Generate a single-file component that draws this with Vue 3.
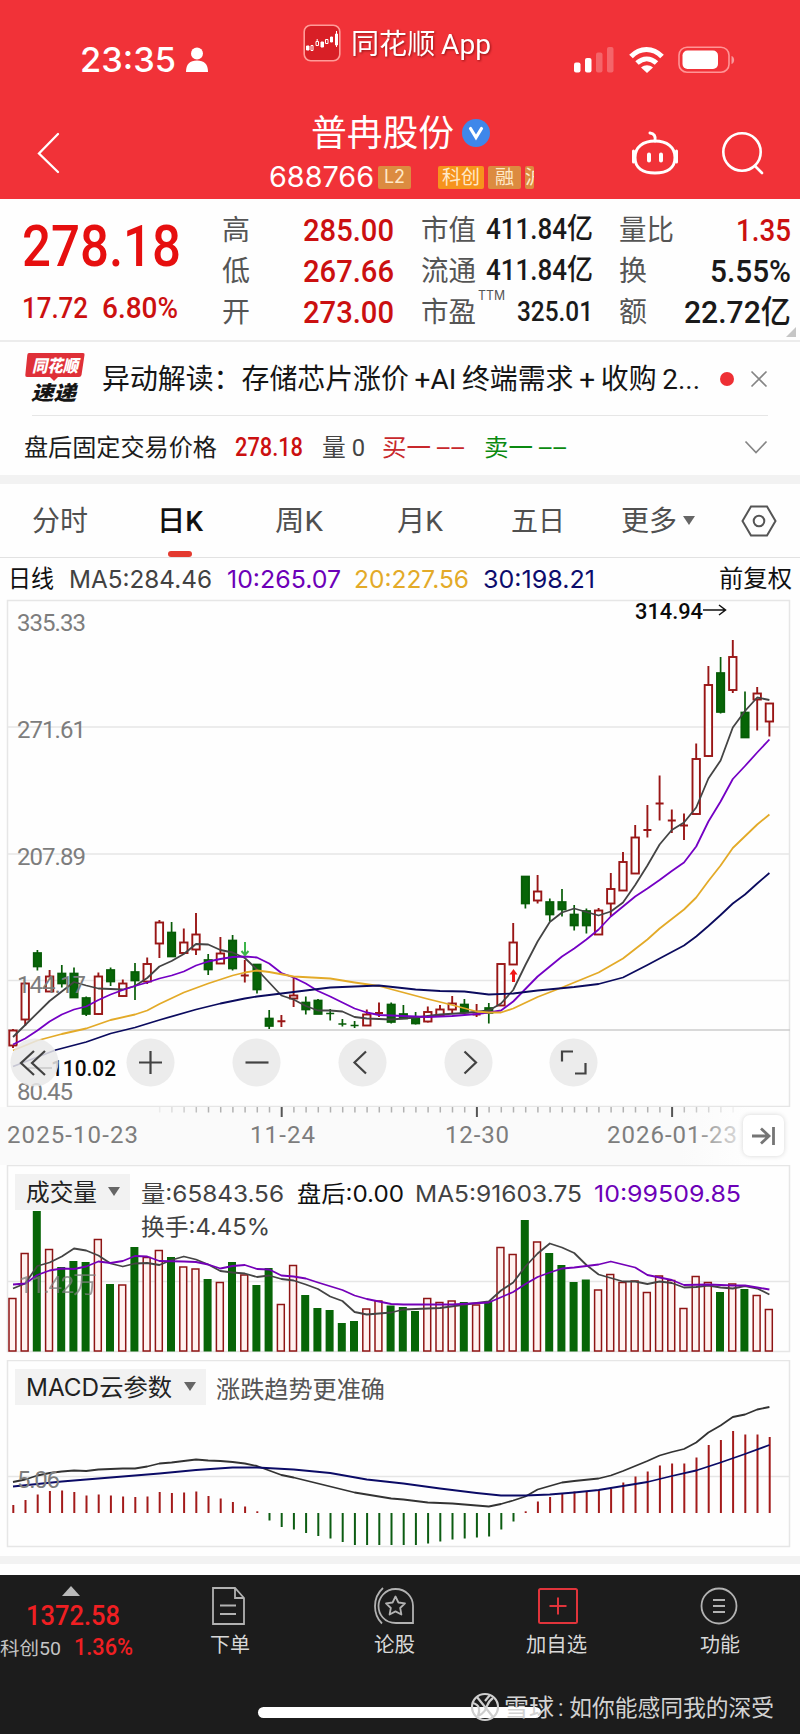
<script setup>
import { h } from 'vue'

// Text run stretched to a given advance width; its box is one font size tall.
const Fit = (p) =>
  h('svg', { class: 'fit', width: p.w, height: p.s, 'font-size': p.s }, [
    h('text', { x: 0, y: p.s * 0.86, textLength: p.w, lengthAdjust: 'spacingAndGlyphs' }, p.t),
  ])
Fit.props = ['t', 'w', 's']

const X0 = 13
const STEP = 12.2
const xi = (i) => X0 + i * STEP

const headline = '异动解读：存储芯片涨价\u2009+AI\u2009终端需求\u2009+\u2009收购\u20092...'
const brand = '同花顺\u2009App'

// colour, high, body top, body bottom, low
const candles = [
  ['r', 1029, 1030.5, 1045.5, 1048], ['r', 982.5, 983.5, 1019.5, 1026], ['g', 950, 953, 966.5, 970.5],
  ['r', 970, 976.5, 991.5, 991.5], ['g', 965, 973.5, 983.5, 987.5], ['g', 967.5, 973.5, 997.5, 997.5],
  ['g', 996.5, 998, 1014, 1016], ['r', 972.5, 976.5, 1014, 1015], ['g', 967.5, 970, 981.5, 986],
  ['r', 979.5, 983.5, 996, 996.5], ['g', 963, 972, 980.5, 1000], ['r', 957.5, 964, 981.5, 984],
  ['r', 920, 922.5, 943.5, 958], ['g', 922, 932.5, 956.5, 957], ['r', 928.5, 942.5, 953, 953.5],
  ['r', 913, 934.5, 949.5, 955], ['g', 954, 960, 969.5, 975], ['r', 937, 953.5, 963.5, 963.5],
  ['g', 935, 940.5, 968.5, 970.5], ['r', 960, 975, 976, 982.5], ['g', 964.5, 964.5, 989.5, 993.5],
  ['g', 1010, 1018.5, 1026, 1029], ['r', 1015, 1021, 1021.5, 1027], ['r', 977, 995.5, 998.5, 1007],
  ['g', 996.5, 1002.5, 1009.5, 1014.5], ['g', 999, 1000.5, 1014, 1014], ['g', 1009, 1013, 1014, 1020.5],
  ['g', 1019, 1023.5, 1024.5, 1026.5], ['g', 1021, 1025, 1026, 1028], ['r', 1009.5, 1014.5, 1025.5, 1025.5],
  ['r', 1002.5, 1012.5, 1013.5, 1017], ['g', 1002.5, 1004.5, 1022, 1023.5], ['g', 1005, 1014, 1018.5, 1019],
  ['g', 1012, 1017, 1023.5, 1024.5], ['r', 1006.5, 1012, 1021.5, 1022.5], ['r', 1005, 1009.5, 1015, 1017],
  ['r', 996, 1003.5, 1009.5, 1013], ['g', 999, 1004.5, 1012.5, 1014], ['r', 1004, 1014, 1015, 1017],
  ['g', 1003, 1008, 1013, 1023.5], ['r', 963.5, 964, 1005.5, 1005.5], ['r', 923, 942.5, 964.5, 965],
  ['g', 876, 876.5, 903.5, 908.5], ['r', 875, 891.5, 900.5, 903.5], ['g', 898.5, 902, 914.5, 921.5],
  ['g', 889, 902, 909.5, 916.5], ['g', 905, 914.5, 925.5, 930.5], ['g', 908.5, 911, 925.5, 933.5],
  ['r', 908, 910.5, 934.5, 935], ['r', 873, 889, 903.5, 916.5], ['r', 852, 862, 890.5, 890.5],
  ['r', 825, 837.5, 873.5, 874], ['r', 805, 829.5, 830.5, 837.5], ['r', 775.5, 803, 804, 820.5],
  ['r', 809.5, 820, 821, 833], ['r', 813.5, 825, 826, 840], ['r', 743.5, 759, 814, 814.5],
  ['r', 666, 685, 756, 757], ['g', 657, 673, 712, 713.5], ['r', 640, 657, 690, 693],
  ['g', 691.5, 712.5, 737.5, 737.5], ['r', 687, 693.5, 699.5, 730.5], ['r', 703, 703.5, 721.5, 736.5],
].map(([c, hi, t, b, lo], i) => ({ up: c === 'r', cross: b - t < 2, hi, t, b, lo, x: xi(i) }))

const line = (pts) => pts.map(([i, y]) => xi(i).toFixed(1) + ',' + y).join(' ')

const ma5 = line([[0, 1037], [1, 1025], [3, 1001], [5, 982], [6, 985.5], [7, 988.5], [9, 989.5], [10, 986], [11, 978], [12, 966.5], [13, 961], [14, 954], [15, 944], [16, 944.5], [17, 950], [18, 952.5], [19, 958], [20, 969.5], [21, 982.5], [22, 995.5], [23, 999.5], [24, 1006], [25, 1010.5], [26, 1010.5], [27, 1011.5], [28, 1017], [29, 1018.5], [31, 1019.5], [33, 1017.5], [35, 1014.5], [37, 1013], [39, 1010.5], [40, 1003.5], [41, 990], [42, 965], [43, 941.5], [44, 922], [45, 912.5], [46, 908.5], [47, 912], [48, 915.5], [49, 911.5], [50, 902.5], [51, 885], [52, 865.5], [53, 844.5], [54, 830], [55, 822.5], [56, 807.5], [57, 778.5], [58, 760.5], [59, 727.5], [60, 711], [61, 697.5], [62, 700]])
const ma10 = line([[0, 1044.5], [1, 1038.5], [2, 1030.5], [3, 1021.5], [4, 1014.5], [5, 1009.5], [6, 1006.5], [7, 1000], [8, 994.5], [9, 990], [10, 986], [11, 982.5], [12, 978.5], [13, 975.5], [14, 971.5], [15, 965.5], [16, 961.5], [17, 959], [18, 957], [19, 956.5], [20, 957.5], [21, 963.5], [22, 973], [23, 977.5], [24, 983.5], [25, 991], [26, 996.5], [27, 1002.5], [28, 1008.5], [29, 1012.5], [30, 1015], [32, 1016], [34, 1017], [36, 1016], [38, 1014], [39, 1012.5], [40, 1010.5], [41, 1001.5], [42, 989], [43, 976.5], [44, 966.5], [45, 956.5], [46, 948.5], [47, 939.5], [48, 929.5], [49, 916.5], [50, 906.5], [51, 896.5], [52, 888.5], [53, 880], [54, 871], [55, 862.5], [56, 846.5], [57, 821.5], [58, 801.5], [59, 779], [60, 766], [61, 752.5], [62, 739.5]])
const ma20 = line([[0, 1050.5], [2, 1040.5], [4, 1034], [6, 1028.5], [8, 1020], [10, 1014.5], [11, 1010.5], [12, 1004], [14, 992.5], [16, 983.5], [18, 975.5], [19, 972.5], [20, 970.5], [21, 972], [23, 976.5], [26, 978.5], [28, 982.5], [30, 986], [32, 992.5], [34, 999], [36, 1005], [38, 1011.5], [39, 1012.5], [40, 1012.5], [41, 1008.5], [43, 997], [45, 987.5], [47, 977.5], [48, 972.5], [50, 958.5], [52, 939.5], [53, 928.5], [55, 909.5], [56, 897.5], [57, 881], [58, 865.5], [59, 848], [61, 824.5], [62, 814.5]])
const ma30 = line([[0, 1066.5], [3.5, 1050], [6, 1042], [8, 1033.5], [10, 1027.5], [12, 1020], [15, 1009.5], [17, 1003.5], [19, 998.5], [20, 996.5], [22, 993.5], [24, 990.5], [26, 987.5], [30, 985.5], [33, 989.5], [35, 991], [37, 991.5], [39, 994.5], [41, 993.5], [43, 990.5], [46, 987], [48, 984], [50, 977.5], [52, 965], [55, 945.5], [56, 936.5], [57, 926], [58, 915], [59, 903.5], [60, 894.5], [61, 883.5], [62, 873]])

const volTops = [1298.5, 1253.5, 1211, 1249.5, 1267, 1261, 1262, 1239.5, 1284, 1285, 1247, 1257.5, 1250.5, 1257, 1267, 1269, 1279, 1282.5, 1262, 1275, 1285, 1268, 1304.5, 1265.5, 1295, 1308, 1310, 1323, 1321, 1309, 1301, 1305.5, 1307, 1311, 1298.5, 1302.5, 1301, 1302, 1305, 1301.5, 1247.5, 1254.5, 1220, 1242, 1253, 1265, 1282, 1279.5, 1290, 1274.5, 1282.5, 1281, 1292.5, 1276, 1280.5, 1308.5, 1276.5, 1282.5, 1292, 1284, 1289, 1295.5, 1309.5]
const vols = volTops.map((y, i) => ({ y, x: xi(i) - 0.6, up: candles[i].up }))
const vma5 = line([[0, 1288.5], [1, 1283.5], [2, 1266], [3, 1262.5], [4, 1256.5], [5, 1248.5], [6, 1250.5], [7, 1255.5], [8, 1263.5], [9, 1266.5], [10, 1263.5], [11, 1263], [12, 1265], [13, 1260], [14, 1256.5], [15, 1259.5], [16, 1264.5], [17, 1271], [18, 1272.5], [19, 1273.5], [20, 1277], [21, 1275.5], [22, 1279], [23, 1280.5], [24, 1284.5], [25, 1289], [26, 1296.5], [27, 1301], [28, 1312], [29, 1314.5], [30, 1313.5], [31, 1312.5], [32, 1309.5], [35, 1308], [38, 1303], [39, 1301.5], [40, 1290.5], [41, 1282.5], [42, 1266.5], [43, 1253.5], [44, 1243.5], [45, 1247.5], [46, 1253], [47, 1265], [48, 1274.5], [50, 1281.5], [51, 1281.5], [52, 1284], [53, 1281.5], [54, 1283], [55, 1287.5], [56, 1287], [57, 1285.5], [58, 1287.5], [59, 1288.5], [60, 1286], [61, 1288.5], [62, 1294.5]])
const vma10 = line([[0, 1284.5], [1, 1283.5], [2, 1275], [3, 1270.5], [4, 1268.5], [5, 1269], [6, 1266.5], [7, 1261.5], [8, 1263], [9, 1261], [10, 1256], [11, 1256.5], [12, 1261], [14, 1261.5], [15, 1262], [16, 1264.5], [17, 1268.5], [18, 1266], [19, 1265], [20, 1269], [21, 1269.5], [22, 1275.5], [23, 1276.5], [24, 1278.5], [25, 1282.5], [27, 1290], [28, 1295.5], [29, 1299], [30, 1301.5], [31, 1304], [32, 1304.5], [36, 1304.5], [39, 1302.5], [41, 1292], [42, 1284], [43, 1277], [44, 1272.5], [45, 1268.5], [46, 1267.5], [48, 1264.5], [49, 1261.5], [51, 1267.5], [52, 1275], [54, 1280], [55, 1285], [57, 1284.5], [59, 1285.5], [60, 1285.5], [61, 1287.5], [62, 1289.5]])

const macdEnds = [1505, 1500, 1494.5, 1491, 1490.5, 1492, 1495.5, 1494.5, 1495.5, 1496.5, 1497, 1496.5, 1492, 1493, 1492.5, 1491.5, 1496, 1498.5, 1502, 1506.5, 1511.3, 1520.5, 1527, 1529.5, 1533, 1536, 1538.5, 1542, 1545, 1545, 1545, 1545, 1545, 1545, 1543.5, 1541.5, 1539.5, 1538.5, 1537.5, 1536.5, 1529.5, 1521.5, 1511.3, 1501.5, 1497, 1493.5, 1491.5, 1491.5, 1490, 1489, 1482.5, 1476.5, 1471.5, 1465.5, 1463.5, 1463.5, 1457.5, 1445, 1440, 1431, 1434.5, 1434.5, 1437]
const macd = macdEnds.map((y, i) => ({ x: xi(i) + 0.3, y, up: y < 1513 }))
const dif = line([[0, 1482], [1, 1479.5], [2, 1475.5], [3, 1473], [4, 1471.5], [5, 1470.5], [6, 1471], [7, 1469.5], [9, 1468.5], [10, 1468.5], [11, 1466.5], [12, 1463.5], [13, 1462.5], [15, 1459.5], [16, 1460.5], [17, 1461], [18, 1462], [19, 1463.5], [20, 1466], [21, 1470.5], [22, 1475], [23, 1477.5], [25, 1483.5], [28, 1492.5], [31, 1498.5], [32, 1499.5], [34, 1502.5], [36, 1503.5], [38, 1505.5], [39, 1506.5], [40, 1504], [41, 1500.5], [42, 1496.5], [43, 1489.5], [45, 1482.5], [46, 1481], [48, 1478.5], [49, 1475.5], [50, 1471], [52, 1461], [53, 1455.5], [54, 1452], [55, 1449], [56, 1442.5], [57, 1432.5], [58, 1425.5], [59, 1417], [60, 1414.5], [61, 1409.5], [62, 1407]])
const dea = line([[0, 1486.5], [4, 1481.5], [8, 1477.5], [12, 1473.5], [15, 1470], [18, 1467.5], [20, 1467.5], [23, 1469.5], [26, 1473], [29, 1479.5], [32, 1483.5], [35, 1488.5], [38, 1493], [40, 1495.5], [42, 1495.5], [44, 1494.5], [46, 1492.5], [48, 1490], [50, 1486], [52, 1482], [54, 1476], [56, 1470.5], [58, 1462.5], [60, 1454], [62, 1445]])

const ticks = Array.from({ length: 48 }, (_, k) => {
  const i = k + 12
  const major = i === 22 || i === 38 || i === 54
  return { x: xi(i) + 0.3, major, o: Math.min(1, (k + 1) / 5, (48 - k) / 6) }
})
</script>

<template>
  <div class="page">
    <header class="top">
      <div class="status">
        <Fit class="clock sf" t="23:35" :w="96" :s="34" />
        <svg class="person" width="24" height="26" viewBox="0 0 24 26"><circle cx="12" cy="6.500" r="6" /><path d="M1 25c0-8 4-11.500 11-11.500S23 17 23 25z" /></svg>
        <div class="brand">
          <svg width="38" height="38" viewBox="0 0 38 38">
            <rect x="1.200" y="1.200" width="35.600" height="35.600" rx="6.500" fill="#d81f26" stroke="#ff9c98" stroke-width="1.600" />
            <g stroke="#fff" stroke-width="1" fill="#fff"><path d="M3.500 22h2.500v4H3.500zM18 18h2.500v5H18zM27.500 13h2v5h-2z" /><path d="M8 21.500h2v5H8zM13 17.500h2.500v4H13zM14.200 15v2M22.500 15.500h2.500v4h-2.500zM33.500 7v16M32.500 10h2v11h-2z" fill="none" /></g>
          </svg>
          <Fit class="shadow" :t="brand" :w="140" :s="28.500" />
        </div>
        <svg class="signals" width="162" height="28" viewBox="0 0 162 28" fill="#fff">
          <rect x="0" y="16.500" width="6.500" height="10" rx="2" /><rect x="11" y="12" width="6.500" height="14.500" rx="2" />
          <rect x="22" y="6.500" width="6.500" height="20" rx="2" opacity=".25" /><rect x="33" y="1" width="6.500" height="25.500" rx="2" opacity=".25" />
          <g fill="none" stroke="#fff" stroke-width="5"><path d="M57 10.500c9-9.500 22-9.500 31 0" /><path d="M63 17c6-5.500 13.500-5.500 19.500 0" /></g>
          <path d="M67 21.500c4-3 8-3 12 0L73 27z" />
          <rect x="105" y="1.200" width="50" height="25" rx="8" fill="none" stroke="#ff9596" stroke-width="1.600" />
          <rect x="108.500" y="4.500" width="35.500" height="18.500" rx="5" /><path d="M157.500 10c3.500 1 3.500 7 0 8z" opacity=".5" />
        </svg>
      </div>
      <div class="titlebar">
        <svg class="back" width="24" height="42" viewBox="0 0 24 42"><path d="M22 2L3 21.500 22 40" /></svg>
        <div class="titles">
          <div class="name"><Fit t="普冉股份" :w="143" :s="36" /><svg width="30" height="30" viewBox="0 0 30 30"><circle cx="15" cy="15" r="14" fill="#3f87ea" /><path d="M9.500 10.500l5.500 9 5.500-9" fill="none" stroke="#fff" stroke-width="3.200" /></svg></div>
          <div class="code">
            <Fit class="sf" t="688766" :w="105" :s="28" />
            <span class="tag"><Fit class="sf" t="L2" :w="21" :s="18" /></span>
            <span class="tag hot"><Fit t="科创" :w="38" :s="19.500" /></span>
            <span class="tag"><Fit t="融" :w="19" :s="19" /></span>
            <span class="tag cut"><Fit t="沪" :w="19" :s="19" /></span>
          </div>
        </div>
        <svg class="robot" width="50" height="46" viewBox="0 0 50 46"><path d="M25 11c-12 0-20 6-20 16.500S13 43 25 43s20-5 20-15.500S37 11 25 11z" /><path d="M3.500 21v11M46.500 21v11M25 11c1-5-1-7.500-5-8" /><path class="eye" d="M19 24.500v6M31 24.500v6" /></svg>
        <svg class="search" width="46" height="44" viewBox="0 0 46 44"><circle cx="22" cy="21" r="18.700" /><path d="M35 35l7 7" /></svg>
      </div>
    </header>

    <section class="quote">
      <div class="last"><Fit class="num big" t="278.18" :w="159" :s="58" /><div class="chg"><Fit class="num" t="17.72" :w="66" :s="29" /><Fit class="num" t="6.80%" :w="76" :s="29" /></div></div>
      <div class="cell c1">
        <Fit t="高" :w="28" :s="28" /><Fit class="num red" t="285.00" :w="91" :s="32" />
        <Fit t="低" :w="28" :s="28" /><Fit class="num red" t="267.66" :w="91" :s="32" />
        <Fit t="开" :w="28" :s="28" /><Fit class="num red" t="273.00" :w="91" :s="32" />
      </div>
      <div class="cell c2">
        <Fit t="市值" :w="55" :s="28" /><Fit class="num ink" t="411.84亿" :w="107" :s="29" />
        <Fit t="流通" :w="55" :s="28" /><Fit class="num ink" t="411.84亿" :w="107" :s="29" />
        <span class="ttm"><Fit t="市盈" :w="55" :s="28" /><Fit class="sf sup" t="TTM" :w="27" :s="13" /></span><Fit class="num ink" t="325.01" :w="76" :s="28" />
      </div>
      <div class="cell c3">
        <Fit t="量比" :w="55" :s="28" /><Fit class="num red" t="1.35" :w="55" :s="32" />
        <Fit t="换" :w="28" :s="28" /><Fit class="num ink" t="5.55%" :w="81" :s="32" />
        <Fit t="额" :w="28" :s="28" /><Fit class="num ink" t="22.72亿" :w="107" :s="32" />
      </div>
      <i class="corner"></i>
    </section>

    <section class="news">
      <svg width="62" height="54" viewBox="0 0 62 54">
        <path d="M5 1h54q2 0 1.500 2l-3 20q-.5 2-2.500 2H34l-4 4-4-4H3q-2 0-1.700-2l2-20Q3.500 1 5 1z" fill="#df3038" />
        <g font-weight="900" font-style="italic"><text x="8" y="20" font-size="17" textLength="46" lengthAdjust="spacingAndGlyphs" fill="#fff">同花顺</text><text x="7" y="47.500" font-size="20" textLength="45" lengthAdjust="spacingAndGlyphs" fill="#151515">速递</text></g>
      </svg>
      <Fit :t="headline" :w="598" :s="28" />
      <i class="dot"></i>
      <svg class="thin" width="18" height="18" viewBox="0 0 18 18"><path d="M1.500 1.500l15 15M16.500 1.500l-15 15" /></svg>
    </section>
    <section class="after">
      <Fit t="盘后固定交易价格" :w="193" :s="24" />
      <Fit class="num red" t="278.18" :w="68" :s="25" />
      <Fit class="grey" t="量 0" :w="43" :s="24" />
      <span class="order buy"><Fit t="买一" :w="49" :s="24" /><Fit t="--" :w="29" :s="22" /></span>
      <span class="order sell"><Fit t="卖一" :w="49" :s="24" /><Fit t="--" :w="29" :s="22" /></span>
      <svg class="thin" width="24" height="14" viewBox="0 0 24 14"><path d="M1.500 1.500L12 12.500 22.500 1.500" /></svg>
    </section>

    <nav class="tabs">
      <Fit t="分时" :w="56" :s="28" />
      <span class="on"><Fit t="日K" :w="46" :s="28" /></span>
      <Fit t="周K" :w="48" :s="28" />
      <Fit t="月K" :w="46" :s="28" />
      <Fit t="五日" :w="54" :s="28" />
      <Fit t="更多" :w="56" :s="28" />
      <i class="caret"></i>
      <svg width="36" height="32" viewBox="0 0 36 32"><path d="M10 1.500h16L34.500 16 26 30.500H10L1.500 16z" /><circle cx="18" cy="16" r="5.300" /></svg>
    </nav>

    <div class="legend">
      <Fit class="black" t="日线" :w="46" :s="23.500" />
      <Fit class="sf l5" t="MA5:284.46" :w="143" :s="24" />
      <Fit class="sf l10" t="10:265.07" :w="114" :s="24" />
      <Fit class="sf l20" t="20:227.56" :w="115" :s="24" />
      <Fit class="sf l30" t="30:198.21" :w="112" :s="24" />
      <Fit class="black" t="前复权" :w="73" :s="23.500" />
    </div>

    <section class="kline">
      <svg class="plot" width="800" height="507" viewBox="0 600 800 507">
        <rect class="frame" x="7.500" y="600.500" width="782" height="506" />
        <path class="grid" d="M8 727h782M8 854h782M8 980.500h782" />
        <path d="M8 1030h782" stroke="#cdcdcd" stroke-width="1.500" />
        <g v-for="(c, i) in candles" :key="i" :class="c.up ? 'up' : 'down'">
          <template v-if="c.cross"><path :d="`M${c.x} ${c.hi}V${c.lo}M${c.x - 4} ${(c.t + c.b) / 2}h8`" /></template>
          <template v-else><path :d="`M${c.x} ${c.hi}V${c.t}M${c.x} ${c.b}V${c.lo}`" /><rect :x="c.x - 3.7" :y="c.t" width="7.400" :height="c.b - c.t" /></template>
        </g>
        <polyline class="w" :points="ma5" stroke="#444" />
        <polyline class="w" :points="ma10" stroke="#7400c4" />
        <polyline class="w" :points="ma20" stroke="#e3aa28" />
        <polyline class="w" :points="ma30" stroke="#0b0b5e" />
        <path d="M245 942v12M241.500 951l3.500 4 3.500-4" fill="none" stroke="#3cb44a" stroke-width="2" />
        <path d="M513.500 969l4 5.500h-2.500V982h-3v-7.500h-2.500z" fill="#f01818" />
        <g class="ax" font-size="24">
          <text x="17" y="631" textLength="69">335.33</text><text x="17" y="738" textLength="69">271.61</text>
          <text x="17" y="865" textLength="69">207.89</text><text x="17" y="992.500" textLength="69">144.17</text>
          <text x="17" y="1099.500" textLength="56">80.45</text>
        </g>
        <g font-family="Roboto" font-size="22.500" font-weight="500" fill="#0a0a0a">
          <text x="635" y="618.500" textLength="68" lengthAdjust="spacingAndGlyphs">314.94</text>
          <text x="51" y="1076" textLength="65" lengthAdjust="spacingAndGlyphs">110.02</text>
        </g>
        <path d="M703 610h22M719 605l6.500 5-6.500 5M52 1068H28" fill="none" stroke="#111" stroke-width="1.500" />
      </svg>
      <div class="tools">
        <svg v-for="(d, i) in ['M24 13L11 25 24 37M35 13L22 25 35 37', 'M13 24.500h23M24.500 13v23', 'M13.500 24.500h23', 'M28 13.500L16.500 24.500 28 35.500', 'M20.500 13.500L32 24.500 20.500 35.500', 'M13 23.500V13.500h11M26 35.500h10.500V25']" :key="i" width="49" height="49" viewBox="0 0 49 49"><circle cx="24.500" cy="24.500" r="24" /><path :d="d" /></svg>
      </div>
    </section>

    <div class="axis">
      <svg width="790" height="54" viewBox="0 1107 790 54">
        <path v-for="(t, i) in ticks" :key="i" :d="`M${t.x} 1107v${t.major ? 10 : 5.5}`" :stroke="t.major ? '#555' : '#b2b2b2'" :stroke-width="t.major ? 2 : 1.5" :opacity="t.o" />
        <linearGradient id="fade" gradientUnits="userSpaceOnUse" x1="690" x2="742" y1="0" y2="0"><stop offset="0" stop-color="#7d7d7d" /><stop offset="1" stop-color="#e4e4e4" /></linearGradient>
        <g class="ax" font-size="24">
          <text x="7" y="1143" textLength="131">2025-10-23</text><text x="250" y="1143" textLength="65">11-24</text>
          <text x="445" y="1143" textLength="64">12-30</text><text x="607" y="1143" textLength="130" fill="url(#fade)">2026-01-23</text>
        </g>
      </svg>
      <button class="end"><svg width="26" height="22" viewBox="0 0 26 22"><path d="M1 11h16M10 3.500l8 7.500-8 7.500M22.500 2v18" /></svg></button>
    </div>

    <section class="panel">
      <svg width="800" height="188" viewBox="0 1165 800 188">
        <rect class="frame" x="7.500" y="1165.500" width="782" height="186" />
        <path class="grid" d="M8 1281.500h782" />
        <template v-for="(v, i) in vols" :key="i">
          <rect v-if="v.up" :x="v.x - 3.4" :y="v.y" width="6.900" :height="1351 - v.y" fill="#fff2f0" stroke="#8e1515" stroke-width="1.500" />
          <rect v-else :x="v.x - 4" :y="v.y" width="8" :height="1351.5 - v.y" fill="#076507" />
        </template>
        <polyline class="w" :points="vma5" stroke="#444" />
        <polyline class="w" :points="vma10" stroke="#7400b8" />
        <text class="ax" x="19" y="1293" font-size="24" textLength="78" opacity=".75">11.42万</text>
      </svg>
      <div class="head vol">
        <span class="chip"><Fit t="成交量" :w="71" :s="24" /><i class="caret"></i></span>
        <Fit class="sf l5" t="量:65843.56" :w="143" :s="23" />
        <Fit class="sf black" t="盘后:0.00" :w="107" :s="23" />
        <Fit class="sf l5" t="MA5:91603.75" :w="167" :s="23" />
        <Fit class="sf l10" t="10:99509.85" :w="147" :s="23" />
        <Fit class="sf l5 turn" t="换手:4.45%" :w="129" :s="23" />
      </div>
    </section>

    <section class="panel macd">
      <svg width="800" height="188" viewBox="0 1360 800 188">
        <rect class="frame" x="7.500" y="1360.500" width="782" height="186" />
        <path class="grid" d="M8 1476.500h782" />
        <path v-for="(m, i) in macd" :key="i" :d="`M${m.x} 1513V${m.y}`" :stroke="m.up ? '#a31a1a' : '#0c5c12'" stroke-width="2" />
        <polyline class="w" :points="dif" stroke="#333" />
        <polyline class="w" :points="dea" stroke="#0b0b66" />
        <text class="ax" x="17" y="1488" font-size="24" textLength="43">5.06</text>
      </svg>
      <div class="head mc">
        <span class="chip"><Fit class="sf" t="MACD云参数" :w="146" :s="24" /><i class="caret"></i></span>
        <Fit class="hint" t="涨跌趋势更准确" :w="169" :s="24" />
      </div>
    </section>

    <footer class="bottom">
      <div class="bar">
        <div class="index">
          <i class="tri"></i>
          <Fit class="num" t="1372.58" :w="94" :s="28" />
          <div class="sub"><Fit class="lab" t="科创50" :w="61" :s="18.500" /><Fit class="num" t="1.36%" :w="59" :s="23" /></div>
        </div>
        <div class="item i1"><svg width="44" height="42" viewBox="0 0 44 42"><path d="M5 3h22l9 10v26H5zM27 3v10h9M12 20.500h16M12 29h16" /></svg><Fit t="下单" :w="40" :s="20" /></div>
        <div class="item i2"><svg width="44" height="42" viewBox="0 0 44 42"><path d="M9 38.500C0 30-1 13 10 3M40 38H23C11 38 5.500 29 5.500 21S12 4 22.500 4 40 12 40 21z" /><path d="M22.500 11.500l2.900 6 6.600.9-4.800 4.600 1.200 6.500-5.900-3.100-5.900 3.100 1.200-6.500L13 18.400l6.600-.9z" stroke-linejoin="round" /></svg><Fit t="论股" :w="41" :s="20" /></div>
        <div class="item add"><svg width="44" height="42" viewBox="0 0 44 42"><rect x="5" y="4" width="38" height="34" rx="1.500" /><path d="M24 12.500v17M15.500 21h17" /></svg><Fit t="加自选" :w="61" :s="20" /></div>
        <div class="item i4"><svg width="44" height="42" viewBox="0 0 44 42"><circle cx="21" cy="21" r="17.500" /><path d="M15 15h12M15 21h12M15 27h12" /></svg><Fit t="功能" :w="40" :s="20" /></div>
      </div>
      <div class="home"></div>
      <div class="mark">
        <svg width="30" height="30" viewBox="0 0 30 30"><circle cx="15" cy="15" r="13" /><path d="M7 5l16 20M23 6C14 12 20 18 8 24M3 11c7 2 7 7 5 13M15 9l5-6" /></svg>
        <Fit t="雪球" :w="50" :s="24" /><Fit t=": 如你能感同我的深受" :w="216" :s="23" />
      </div>
    </footer>
  </div>
</template>

<style>
body { margin: 0; background: #fefefe; }
</style>

<style scoped>
.page { width: 800px; height: 1734px; overflow: hidden; background: #fefefe; color: #1c1c1c; font-family: Roboto, "Noto Sans CJK SC", sans-serif; font-weight: 400; }
.page svg { display: block; flex: none; }
.fit { overflow: visible; fill: currentColor; }
.sf { font-family: Inter, "Noto Sans CJK SC", sans-serif; }
.num { font-weight: 500; }
.red { color: #cb1010; }
.ink { color: #1a1a1a; }
.grey { color: #444; }
.black { color: #101010; }
.l5 { color: #424242; }
.l10 { color: #6c00b8; }
.l20 { color: #e3aa28; }
.l30 { color: #0c0c6c; }

.top { height: 199px; background: #f13238; color: #fff; }
.status { height: 100px; display: grid; grid-template-columns: 80px 105px 118px 271px 1fr; align-items: center; }
.clock { grid-column: 2; margin-top: 19px; font-weight: 550; }
.person { grid-column: 3; fill: #fff; margin-top: 20px; }
.brand { grid-column: 4; display: flex; align-items: center; gap: 10px; margin-top: -14px; }
.shadow { filter: drop-shadow(1px 1.500px 1px rgba(90, 0, 0, .6)); }
.signals { grid-column: 5; margin-top: 19px; }
.titlebar { height: 99px; display: grid; grid-template-columns: 36px 233px 361px 90px 1fr; }
.titlebar svg:not(.fit) { stroke-linecap: round; }
.back { grid-column: 2; margin-top: 32px; fill: none; stroke: #fff; stroke-width: 2.300; }
.name { display: flex; align-items: center; gap: 7px; margin: 15px 0 0 42px; height: 36px; }
.code { display: flex; align-items: center; height: 24px; margin-top: 14px; }
.tag { height: 23px; width: 33px; margin-left: 4px; display: flex; align-items: center; justify-content: center; background: #dc8b40; border-radius: 2px; overflow: hidden; color: #ffe9c8; }
.tag.hot { width: 46px; margin-left: 27px; background: #f6931d; }
.tag.cut { width: 9px; justify-content: flex-start; }
.robot { fill: none; stroke: #fff; stroke-width: 3; margin-top: 30px; }
.eye { stroke-width: 4; }
.search { fill: none; stroke: #fff; stroke-width: 2.600; margin-top: 31px; }

.quote { position: relative; height: 141px; display: grid; grid-template-columns: 22px 200px 199px 198px 171px; border-bottom: 2px solid #ececec; }
.last { grid-column: 2; color: #e60f0f; padding-top: 17px; }
.chg { display: flex; gap: 14px; margin-top: 19px; color: #cc1010; }
.cell { display: grid; grid-template-columns: auto auto; grid-template-rows: 41px 41px 41px; justify-content: space-between; align-items: center; padding-top: 10px; height: 123px; color: #555; }
.cell > .num { justify-self: end; margin-top: -2px; }
.c1, .c2, .c3 { width: 172px; }
.ttm { display: block; position: relative; width: 55px; }
.sup { position: absolute; left: 57px; top: -9px; }
.corner { position: absolute; right: 4px; bottom: 3px; border-left: 10px solid transparent; border-bottom: 10px solid #c6c6c6; }

.news { height: 73px; display: grid; grid-template-columns: 77px 619px 30px 1fr; align-items: center; margin: 0 32px 0 24px; position: relative; color: #151515; }
.news > .fit { margin-left: 1px; }
.news::after { content: ""; position: absolute; left: 8px; right: 0; bottom: -1px; border-bottom: 1.500px solid #e6e6e6; }
.dot { width: 14px; height: 14px; border-radius: 50%; background: #ee2f34; }
.thin { fill: none; stroke: #858585; stroke-width: 1.700; }
.after { height: 60px; padding-left: 24px; display: grid; grid-template-columns: 211px 87px 60px 102px 260px 1fr; align-items: center; padding-top: 3px; box-sizing: border-box; }
.order { display: flex; align-items: center; gap: 5px; }
.buy { color: #c8282c; }
.sell { color: #0b8a10; }

.tabs { height: 83px; box-sizing: border-box; border-top: 9px solid #f2f2f2; border-bottom: 1.500px solid #e2e2e2; padding-left: 32px; display: grid; grid-template-columns: 125px 118px 122px 114px 110px 62px 58px 1fr; align-items: center; color: #505050; }
.tabs > svg:last-child { fill: none; stroke: #555; stroke-width: 2; }
.on { height: 100%; display: flex; flex-direction: column; justify-content: center; color: #111; font-weight: 500; position: relative; width: 46px; }
.on::after { content: ""; position: absolute; left: 11px; bottom: 0; width: 24px; height: 6px; border-radius: 3px; background: #e43a2f; }
.caret { display: block; border: 6px solid transparent; border-top: 9px solid #666; border-bottom: 0; width: 0; }
.legend { height: 42px; padding-left: 8px; display: grid; grid-template-columns: 61px 158px 127px 129px 236px 1fr; align-items: center; }

.kline, .panel { position: relative; }
.plot { overflow: visible; }
.frame { fill: none; stroke: #e6e6e6; stroke-width: 1.500; }
.grid { stroke: #e6e6e6; stroke-width: 1.300; }
.up { stroke: #991616; fill: #fefefe; stroke-width: 1.900; }
.down { stroke: #075c07; fill: #076507; stroke-width: 1.700; }
.w { fill: none; stroke-width: 1.800; stroke-linejoin: round; }
.ax { fill: #7d7d7d; font-family: Roboto, "Noto Sans CJK SC"; }
.tools { position: absolute; left: 10px; top: 438px; display: flex; gap: 56.800px; }
.tools > svg:first-child { margin-right: 10.500px; }
.tools circle { fill: #e9e9e9; opacity: .85; }
.tools path { fill: none; stroke: #424242; stroke-width: 2.200; }
.axis { height: 58px; display: grid; position: relative; background: linear-gradient(90deg, #fafafa 85%, #fefefe 94%); }
.end { position: absolute; left: 743px; top: 8px; width: 41px; height: 41px; padding: 0; border: 0; border-radius: 7px; background: #fff; box-shadow: 0 0 5px rgba(0, 0, 0, .16); display: grid; place-items: center; }
.end svg { fill: none; stroke: #757575; stroke-width: 2.800; }

.panel { height: 188px; }
.macd { margin-top: 7px; }
.head { position: absolute; left: 15px; top: 8px; display: grid; align-items: center; }
.vol { grid-template-columns: 126px 156px 118px 179px 150px; grid-template-rows: 37px 30px; }
.vol > .fit { margin-top: 4px; }
.mc { grid-template-columns: 201px 180px; height: 37px; color: #555; }
.hint { margin-top: 4px; }
.vol > .turn { grid-column: 2; margin-top: 2px; }
.chip { height: 36px; width: 115px; box-sizing: border-box; padding: 0 10px 0 11px; background: #f2f2f2; display: flex; align-items: center; justify-content: space-between; color: #222; }
.mc .chip { width: 191px; }

.bottom { margin-top: 8px; border-top: 8px solid #f2f2f2; padding-top: 11px; position: relative; }
.bar { height: 159px; background: #1c1c1c; display: grid; grid-template-columns: 143px 175px 159px 164px 159px; align-items: start; }
.index { color: #ef1f22; display: grid; justify-items: start; padding-top: 11px; }
.index > .num { margin: 5px 0 0 26px; }
.tri { margin-left: 62px; border: 9px solid transparent; border-bottom: 10px solid #b9b9b9; border-top: 0; }
.sub { display: grid; grid-template-columns: 74px 60px; align-items: center; height: 25px; margin-top: 5px; }
.lab { color: #c4c4c4; margin-top: 4px; }
.item { display: grid; justify-items: center; gap: 8px; padding-top: 10px; color: #d8d8d8; position: relative; }
.i1, .i4 { left: -1px; }
.i2, .add { left: -3px; }
.item > svg:first-child { fill: none; stroke: #b2b2b2; stroke-width: 1.800; }
.item.add > svg:first-child { stroke: #e0343b; stroke-width: 2; }
.home { position: absolute; left: 258px; top: 143px; width: 283px; height: 11px; border-radius: 6px; background: #fff; }
.mark { position: absolute; left: 470px; top: 128px; display: flex; align-items: center; gap: 4px; color: #d2d2d2; }
.mark > svg:first-child { fill: none; stroke: #cfcfcf; stroke-width: 2.200; }
</style>
